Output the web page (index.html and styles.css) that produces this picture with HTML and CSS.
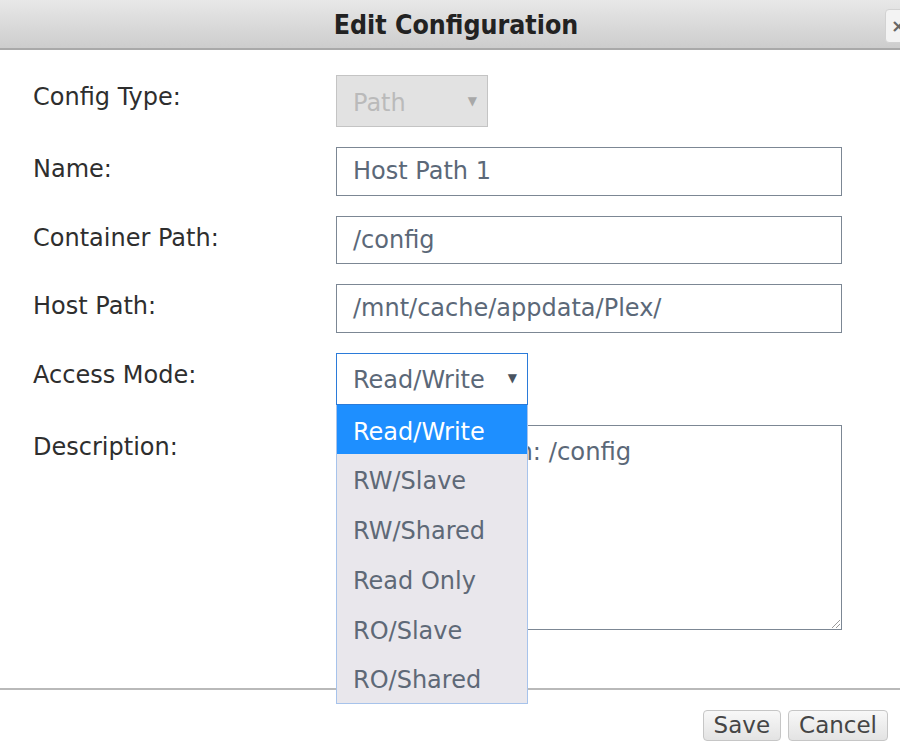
FILE: index.html
```html
<!DOCTYPE html>
<html>
<head>
<meta charset="utf-8">
<link rel="stylesheet" href="styles.css">
</head>
<body>
<div class="dialog">
  <div class="titlebar">
    <span class="title">Edit Configuration</span>
    <button class="close">×</button>
  </div>
  <div class="form">
    <div class="label">Config Type:</div>
    <div class="field">
      <div class="select disabled"><span>Path</span><span class="arrow">▼</span></div>
    </div>

    <div class="label">Name:</div>
    <div class="field"><div class="input">Host Path 1</div></div>

    <div class="label">Container Path:</div>
    <div class="field"><div class="input">/config</div></div>

    <div class="label">Host Path:</div>
    <div class="field"><div class="input">/mnt/cache/appdata/Plex/</div></div>

    <div class="label">Access Mode:</div>
    <div class="field">
      <div class="select-wrap">
        <div class="select open"><span>Read/Write</span><span class="arrow">▼</span></div>
        <ul class="options">
          <li class="selected">Read/Write</li>
          <li>RW/Slave</li>
          <li>RW/Shared</li>
          <li>Read Only</li>
          <li>RO/Slave</li>
          <li>RO/Shared</li>
        </ul>
      </div>
    </div>

    <div class="label">Description:</div>
    <div class="field">
      <div class="textarea">Container Path: /config<span class="grip"></span></div>
    </div>
  </div>
  <div class="footer">
    <button class="btn">Save</button>
    <button class="btn">Cancel</button>
  </div>
</div>
</body>
</html>
```

FILE: styles.css
```css
html, body {
  margin: 0;
  padding: 0;
  background: #ffffff;
  overflow: hidden;
}

body {
  width: 900px;
  height: 750px;
  font-family: "DejaVu Sans", Verdana, sans-serif;
}

.dialog {
  width: 912px;
  background: #ffffff;
}

.titlebar {
  position: relative;
  height: 50px;
  background: linear-gradient(#e8e8e8, #cdcdcd);
  border-bottom: 2px solid #a9a9a9;
  box-sizing: border-box;
  display: flex;
  align-items: center;
  justify-content: center;
}

.title {
  font-family: "DejaVu Sans Condensed", "DejaVu Sans", sans-serif;
  font-weight: bold;
  font-size: 26.5px;
  color: #222222;
  padding-top: 1px;
}

.close {
  position: absolute;
  left: 885px;
  top: 9px;
  width: 28px;
  height: 34px;
  padding: 0 0 0 5px;
  margin: 0;
  border: 1px solid #d2d2d2;
  border-radius: 4px;
  background: #f3f3f3;
  color: #666666;
  font-family: "DejaVu Sans", sans-serif;
  font-size: 18px;
  font-weight: bold;
  text-align: left;
  line-height: 30px;
}

.form {
  display: grid;
  grid-template-columns: 303px 506px;
  row-gap: 20px;
  padding: 25px 0 58px 33px;
}

.label {
  font-size: 24px;
  line-height: 29px;
  color: #2e2e2e;
  padding-top: 8px;
}

.field {
  display: flex;
}

.input {
  box-sizing: border-box;
  width: 506px;
  height: 48.5px;
  border: 1px solid #7c8794;
  padding: 0 16px;
  font-size: 24px;
  line-height: 47px;
  color: #5b6878;
  white-space: nowrap;
}

.select-wrap {
  position: relative;
}

.select {
  box-sizing: border-box;
  height: 52px;
  display: flex;
  align-items: center;
  justify-content: space-between;
  padding: 3px 10px 0 16px;
  font-size: 24px;
  color: #5b6878;
}

.select .arrow {
  font-size: 12px;
  padding-bottom: 4px;
}

.select.disabled {
  width: 152px;
  background: #e2e2e2;
  border: 1px solid #c4c4c4;
  color: #bababa;
}

.select.disabled .arrow {
  color: #a8a8a8;
}

.select.open {
  width: 192px;
  background: #ffffff;
  border: 1px solid #2b7bd9;
}

.select.open .arrow {
  color: #4a5360;
}

.options {
  position: absolute;
  left: 0;
  top: 52px;
  z-index: 2;
  box-sizing: border-box;
  width: 192px;
  margin: 0;
  padding: 0;
  list-style: none;
  background: #e9e7ec;
  border: 1px solid #a7c3eb;
  border-top: none;
}

.options li {
  height: 49.8px;
  line-height: 54px;
  padding-left: 16px;
  font-size: 24px;
  color: #5e6977;
  white-space: nowrap;
}

.options li.selected {
  background: #1e8fff;
  color: #ffffff;
}

.textarea {
  position: relative;
  box-sizing: border-box;
  width: 506px;
  height: 205px;
  border: 1px solid #7c8794;
  padding: 11px 16px;
  font-size: 24.3px;
  line-height: 29px;
  color: #5b6878;
  white-space: nowrap;
}

.grip {
  position: absolute;
  right: 1px;
  bottom: 1px;
  width: 8px;
  height: 8px;
  background: linear-gradient(135deg, transparent 45%, #9a9a9a 45%, #9a9a9a 55%, transparent 55%, transparent 70%, #9a9a9a 70%, #9a9a9a 80%, transparent 80%);
}

.footer {
  border-top: 2px solid #b9b9b9;
  display: flex;
  justify-content: flex-end;
  gap: 7px;
  padding: 20px 24px 0 0;
}

.btn {
  box-sizing: border-box;
  height: 31px;
  margin: 0;
  padding: 0 10px;
  border: 1px solid #c6c6c6;
  border-radius: 4px;
  background: linear-gradient(#f8f8f8, #e3e3e3);
  font-family: "DejaVu Sans", sans-serif;
  font-size: 23px;
  line-height: 28px;
  color: #454545;
}
```
